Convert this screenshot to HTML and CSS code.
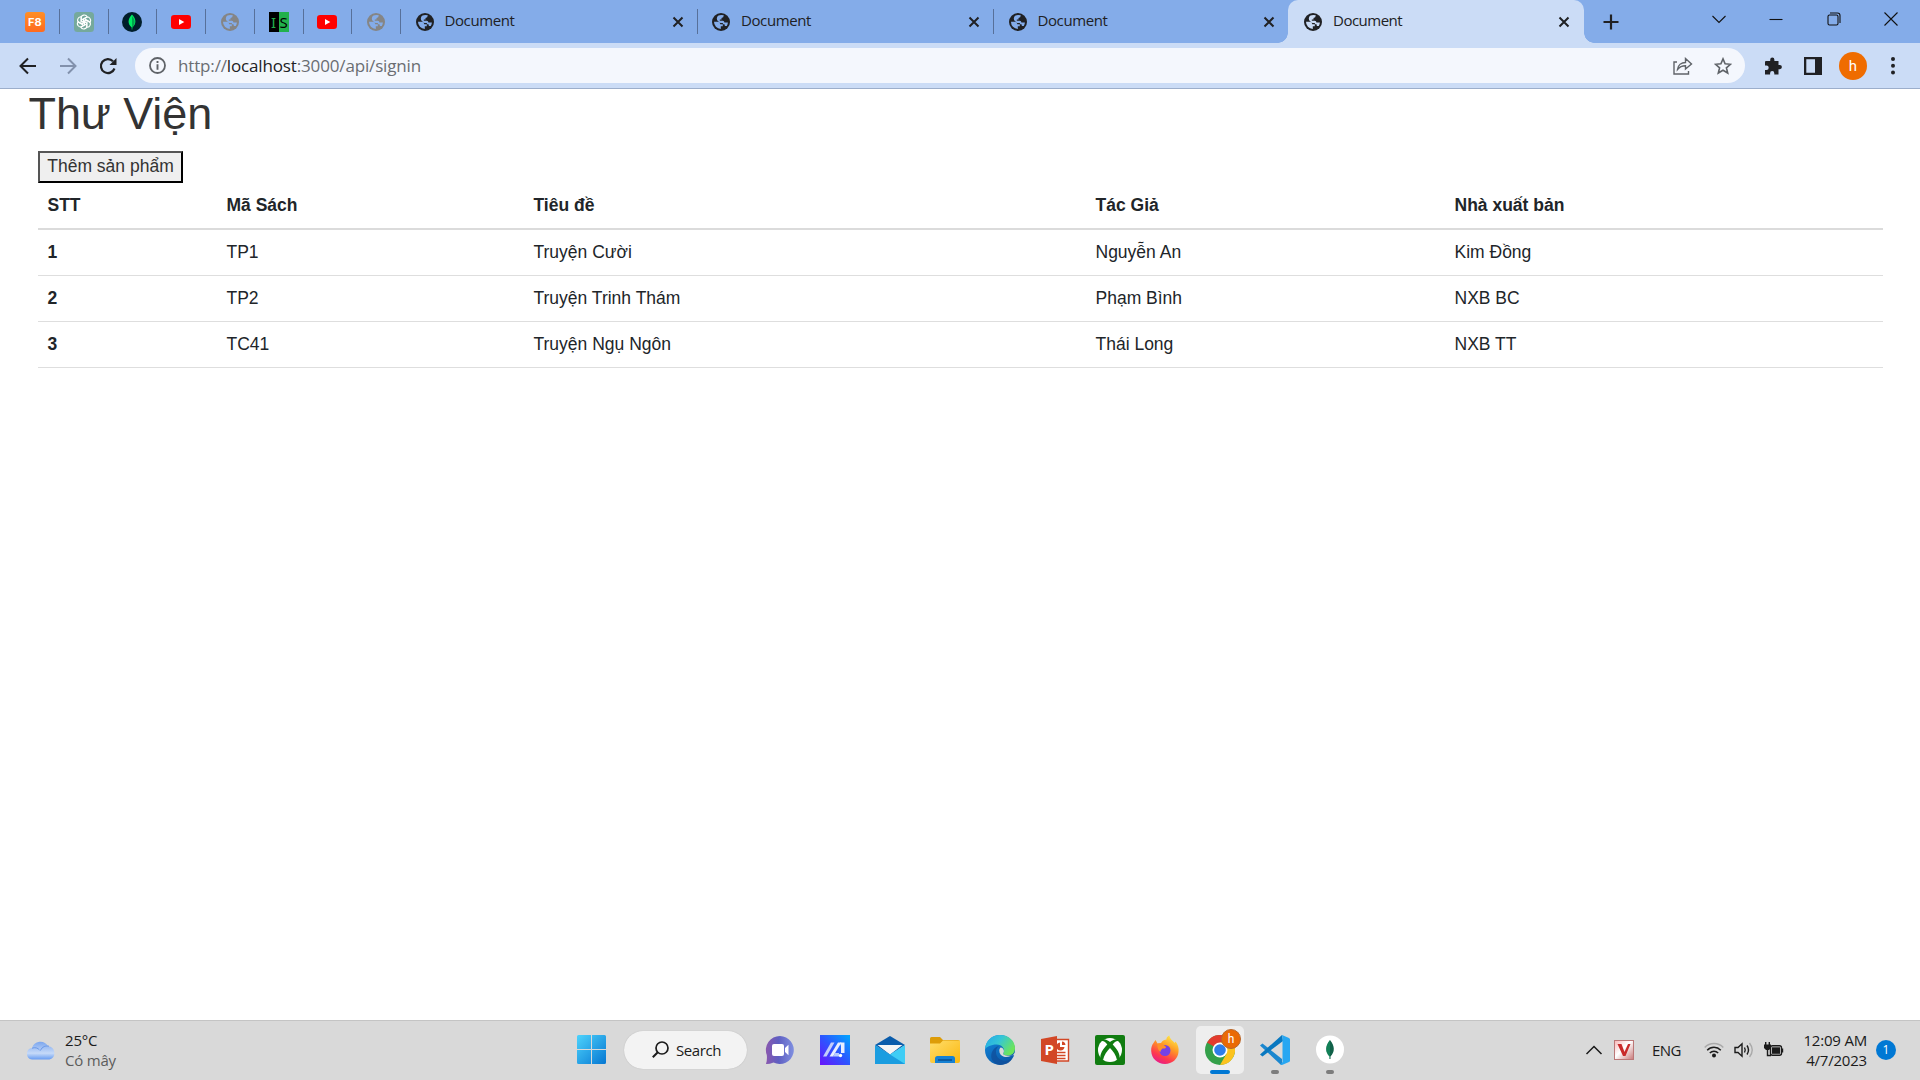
FILE: index.html
```html
<!DOCTYPE html>
<html lang="vi">
<head>
<meta charset="utf-8">
<title>Document</title>
<link rel="stylesheet" href="styles.css">
</head>
<body>
<svg width="0" height="0" class="defs">
  <defs>
    <symbol id="x" viewBox="0 0 12 12"><path d="M1.500 1.500L10.500 10.500M10.500 1.500L1.500 10.500" stroke="#202124" stroke-width="2"/></symbol>
    <symbol id="yt" viewBox="0 0 20 14"><rect width="20" height="14" rx="3.200" fill="#f00"/><path d="M8 4L13.300 7L8 10Z" fill="#fff"/></symbol>
    <symbol id="earth" viewBox="0 0 18 18"><circle cx="9" cy="9" r="9" fill="currentColor"/><path class="land" d="M2 8.800H5.500Q8 8.800 8.300 11.200H10.800V13.300H8.800V15.900A7 7 0 0 1 2 8.800ZM6.500 2.500Q9 1.500 11.800 2.300Q11.700 4.800 9.500 4.900V6.500H7.800V7.800H10.800Q12.400 8 12.400 9.600H15.900Q15.800 11.500 14.800 13H12.800V11.500Q10.800 11.500 10.700 9.900H8.500Q5 8.500 4.800 5.500Q4.800 3.500 6.500 2.500Z"/></symbol>
    <linearGradient id="gw" x1="0" y1="0" x2="1" y2="1"><stop stop-color="#4dd3fc"/><stop offset="1" stop-color="#0677d2"/></linearGradient>
    <linearGradient id="gt" x1="0" y1="0" x2="1" y2="0"><stop stop-color="#8a58ae"/><stop offset=".45" stop-color="#5f5fc2"/><stop offset="1" stop-color="#7f8fe0"/></linearGradient>
    <linearGradient id="gm" x1="0" y1="1" x2="1" y2="0"><stop stop-color="#6a12fb"/><stop offset=".5" stop-color="#2d55ff"/><stop offset="1" stop-color="#00a8ff"/></linearGradient>
    <linearGradient id="gf" x1="0" y1="0" x2="1" y2="1"><stop stop-color="#ffdd6b"/><stop offset="1" stop-color="#fbb80f"/></linearGradient>
    <linearGradient id="ge" x1="0" y1="0" x2="1" y2=".5"><stop stop-color="#22a6ea"/><stop offset=".5" stop-color="#35c6d6"/><stop offset="1" stop-color="#6be45c"/></linearGradient>
    <linearGradient id="gb" x1="0" y1="0" x2=".7" y2="1"><stop stop-color="#1389dd"/><stop offset="1" stop-color="#0a58a8"/></linearGradient>
    <linearGradient id="gx" x1=".8" y1="0" x2=".3" y2="1"><stop stop-color="#fff14c"/><stop offset=".4" stop-color="#ff9a24"/><stop offset=".75" stop-color="#ff3a4c"/><stop offset="1" stop-color="#e61b8c"/></linearGradient>
    <linearGradient id="gc" x1="0" y1="0" x2="0" y2="1"><stop stop-color="#7ba6ee"/><stop offset=".65" stop-color="#c6daf8"/><stop offset="1" stop-color="#679cf2"/></linearGradient>
    <linearGradient id="gv" x1="0" y1="0" x2="1" y2="1"><stop stop-color="#f8b5b5"/><stop offset=".45" stop-color="#fff"/><stop offset="1" stop-color="#c87777"/></linearGradient>
  </defs>
</svg>

<header class="tabs">
  <div class="pin"><span class="f8">F8</span></div>
  <div class="pin"><svg width="20" height="20" viewBox="0 0 20 20"><rect width="20" height="20" rx="3.500" fill="#75a99c"/><g fill="none" stroke="#fff" stroke-width="1.100"><path id="petal" d="M7 10.800V6.200C7 2.500 12 2 13.200 5L9.500 7.300V11.500"/><use href="#petal" transform="rotate(60 10 10)"/><use href="#petal" transform="rotate(120 10 10)"/><use href="#petal" transform="rotate(180 10 10)"/><use href="#petal" transform="rotate(240 10 10)"/><use href="#petal" transform="rotate(300 10 10)"/></g></svg></div>
  <div class="pin"><svg width="20" height="20" viewBox="0 0 20 20"><circle cx="10" cy="10" r="10" fill="#001e2b"/><path d="M10 2.500C14.500 7 14.500 12 10.300 15.500V17.500H9.700V15.500C5.500 12 5.500 7 10 2.500Z" fill="#00ed64"/><path d="M10 4V16C13.500 12 13.500 8 10 4Z" fill="#00a84c"/></svg></div>
  <div class="pin"><svg width="20" height="14"><use href="#yt"/></svg></div>
  <div class="pin grey"><svg width="18" height="18"><use href="#earth"/></svg></div>
  <div class="pin"><span class="is"><span class="i">I</span><span class="s">S</span></span></div>
  <div class="pin"><svg width="20" height="14"><use href="#yt"/></svg></div>
  <div class="pin grey"><svg width="18" height="18"><use href="#earth"/></svg></div>
  <div class="tab"><svg width="18" height="18"><use href="#earth"/></svg><span class="title">Document</span><svg width="12" height="12"><use href="#x"/></svg></div>
  <div class="tab"><svg width="18" height="18"><use href="#earth"/></svg><span class="title">Document</span><svg width="12" height="12"><use href="#x"/></svg></div>
  <div class="tab last"><svg width="18" height="18"><use href="#earth"/></svg><span class="title">Document</span><svg width="12" height="12"><use href="#x"/></svg></div>
  <div class="tab active"><svg width="18" height="18"><use href="#earth"/></svg><span class="title">Document</span><svg width="12" height="12"><use href="#x"/></svg></div>
  <svg class="plus" width="16" height="16" viewBox="0 0 16 16"><path d="M8 .5V15.500M.5 8H15.500" stroke="#202124" stroke-width="2.200"/></svg>
  <div class="win">
    <svg width="14" height="14" viewBox="0 0 14 14"><path d="M.5 4L7 10.500L13.500 4"/></svg>
    <svg width="14" height="14" viewBox="0 0 14 14"><path d="M.5 7.500H13.500"/></svg>
    <svg width="14" height="14" viewBox="0 0 14 14"><rect x="1" y="3" width="10" height="10" rx="1.500"/><path d="M3 1H10.500Q13 1 13 3.500V11"/></svg>
    <svg width="14" height="14" viewBox="0 0 14 14"><path d="M.5 .5L13.500 13.500M13.500 .5L.5 13.500"/></svg>
  </div>
</header>

<div class="toolbar">
  <nav class="nav">
    <svg width="18" height="18" viewBox="0 0 18 18"><path d="M17 9H2M9 1.500L1.500 9L9 16.500" fill="none" stroke="#202124" stroke-width="2"/></svg>
    <svg width="18" height="18" viewBox="0 0 18 18"><path d="M1 9H16M9 1.500L16.500 9L9 16.500" fill="none" stroke="#8291ac" stroke-width="2"/></svg>
    <svg width="18" height="18" viewBox="0 0 18 18"><path d="M15.500 11.500A7 7 0 1 1 14 4.200" fill="none" stroke="#202124" stroke-width="2.200"/><path d="M17.500 1V8H10.500Z" fill="#202124"/></svg>
  </nav>
  <div class="omnibox">
    <svg width="17" height="17" viewBox="0 0 17 17"><circle cx="8.500" cy="8.500" r="7.500" fill="none" stroke="#5f6368" stroke-width="1.800"/><path d="M8.500 7.300V12.700M8.500 4V5.900" stroke="#5f6368" stroke-width="1.900"/></svg>
    <span class="url">http://<b>localhost</b>:3000/api/signin</span>
    <svg width="20" height="18" viewBox="0 0 20 18"><path d="M4 5H1V17H15.500V14M4.500 12.500C5 8 8.500 5.500 12.500 5.500V1.500L18.500 7L12.500 12V8.800C9 8.800 6.500 10 4.500 12.500Z" fill="none" stroke="#5f6368" stroke-width="1.400"/></svg>
    <svg class="star" width="18" height="18" viewBox="0 0 18 18"><path d="M9 1.900L11.100 6.800L16.500 7.300L12.400 10.800L13.700 16L9 13.200L4.300 16L5.600 10.800L1.500 7.300L6.900 6.800Z" fill="none" stroke="#5f6368" stroke-width="1.600"/></svg>
  </div>
  <div class="tools">
    <svg width="18" height="18" viewBox="0 0 18 18"><path d="M2 4H6.200V2.700A2.100 2.100 0 0 1 10.400 2.700V4H14.500V8H15.800A2.100 2.100 0 0 1 15.800 12.200H14.500V17.500H10.300V16.200A2.100 2.100 0 0 0 6.100 16.200V17.500H1V13H2.500A2.200 2.200 0 0 0 2.500 8.600H1V5Q1 4 2 4Z" fill="#202124"/></svg>
    <svg class="panel" width="18" height="18" viewBox="0 0 18 18"><path fill="#202124" fill-rule="evenodd" d="M0 0H18V18H0ZM2.300 2.300V15.700H11V2.300Z"/></svg>
    <span class="avatar">h</span>
    <svg width="4" height="18" viewBox="0 0 4 18"><g fill="#202124"><circle cx="2" cy="2" r="2"/><circle cx="2" cy="8.700" r="2"/><circle cx="2" cy="15.500" r="2"/></g></svg>
  </div>
</div>

<main class="page">
  <h1>Thư Viện</h1>
  <button class="add">Thêm sản phẩm</button>
  <table class="books">
    <thead><tr><th class="c1">STT</th><th class="c2">Mã Sách</th><th class="c3">Tiêu đề</th><th class="c4">Tác Giả</th><th>Nhà xuất bản</th></tr></thead>
    <tbody>
      <tr><th>1</th><td>TP1</td><td>Truyện Cười</td><td>Nguyễn An</td><td>Kim Đồng</td></tr>
      <tr><th>2</th><td>TP2</td><td>Truyện Trinh Thám</td><td>Phạm Bình</td><td>NXB BC</td></tr>
      <tr><th>3</th><td>TC41</td><td>Truyện Ngụ Ngôn</td><td>Thái Long</td><td>NXB TT</td></tr>
    </tbody>
  </table>
</main>

<footer class="taskbar">
  <div class="weather">
    <svg width="30" height="20" viewBox="0 0 30 20"><path d="M6 19.500A5.800 5.800 0 0 1 6 8A8.700 8.700 0 0 1 22 6.200A6.800 6.800 0 0 1 23.500 19.500Z" fill="url(#gc)"/><path d="M6 8.200C9 7 12 8 13.500 10M14.500 10.500C16 6.500 20 5.500 23 6.200" fill="none" stroke="#6b98e8" stroke-width="1"/></svg>
    <div class="wtext"><span>25°C</span><span class="dim">Có mây</span></div>
  </div>
  <div class="apps">
    <svg class="start" width="29" height="29" viewBox="0 0 29 29"><path d="M1.500 0H14V14H0V1.500Q0 0 1.500 0ZM15 0H27.500Q29 0 29 1.500V14H15ZM0 15H14V29H1.500Q0 29 0 27.500ZM15 15H29V27.500Q29 29 27.500 29H15Z" fill="url(#gw)"/></svg>
    <div class="search"><svg width="17" height="17" viewBox="0 0 17 17"><circle cx="10" cy="7" r="6" fill="none" stroke="#1b1b1b" stroke-width="1.700"/><path d="M5.800 11.200L.8 16.200" stroke="#1b1b1b" stroke-width="2"/></svg><span>Search</span></div>
    <div class="app"><svg width="30" height="30" viewBox="0 0 30 30"><path d="M15 1A14 14 0 1 1 8.500 27.500Q4 29.300 1 29Q2.300 25 1.800 20A14 14 0 0 1 15 1Z" fill="url(#gt)"/><rect x="7" y="9" width="12" height="12" rx="2" fill="#fff"/><path d="M20 13L23.500 9.800V20.200L20 17Z" fill="#fff"/></svg></div>
    <div class="app"><svg width="30" height="30" viewBox="0 0 30 30"><path fill="url(#gm)" d="M0 0H30V30H0Z"/><path d="M3 21.500L11 7.500H14.500L6.500 21.500Z" fill="#c3cdfb"/><path d="M9.500 21.500L18 7.500H21.500L13 21.500Z" fill="#e8eeff"/><path d="M20 7.500H24.500V18H21V11Z" fill="#e8eeff"/><path d="M15 18H19V21.500H13Z" fill="#b5caff"/><circle cx="20.500" cy="20.500" r="1.700" fill="#fff"/></svg></div>
    <div class="app"><svg width="30" height="30" viewBox="0 0 30 30"><path d="M0 10L15 1L30 10L15 20Z" fill="#0a5cab"/><path d="M2.500 10H27.500L15 19.500Z" fill="#f5f5f5"/><path d="M30 10V29H0Z" fill="#3fcdf5"/><path d="M0 10L30 29H0Z" fill="#1b9de0"/></svg></div>
    <div class="app"><svg width="30" height="30" viewBox="0 0 30 30"><path d="M0 3.500Q0 2 1.500 2H10L13 5H28Q30 5 30 7V10H0Z" fill="#dd9c08"/><path d="M0 8.500H10L13 5.500H30V26Q30 28 28 28H2Q0 28 0 26Z" fill="url(#gf)"/><path d="M5 28V23.500Q5 21 7.500 21H22.500Q25 21 25 23.500V28Z" fill="#1681d3"/><path d="M8 25H22" stroke="#0a4f91" stroke-width="1.500"/></svg></div>
    <div class="app"><svg width="30" height="30" viewBox="0 0 30 30"><circle cx="15" cy="15" r="15" fill="url(#gb)"/><path d="M0 14C1 5 7 0 15 0C24 0 30 6 30 13C30 18 27 20.500 22.500 20.500C19 20.500 17.500 19 18.500 17.500C20.500 14 17 9.500 11.500 9.500C6 9.500 1.500 12 0 14Z" fill="url(#ge)"/><path d="M14 11C9 14 10 24 18 25.500C22 26.500 26 24.500 27.500 23C25 28 20 30 15 30C8 29 4.500 23 7 17C8.500 13.500 11 11.500 14 11Z" fill="#104e9a" opacity=".75"/><path d="M15.500 12.500C13 15 14.500 20.500 19 21.700C22.500 22.600 26 21 28 20L30.500 17V20L27 20.500C24 21.300 20 20.500 18.300 19.200C17.800 18.500 18.700 17.500 18.900 16.500C19.200 14.500 17.500 12.500 15.500 12.500Z" fill="#d9d9d9"/></svg></div>
    <div class="app"><svg width="30" height="30" viewBox="0 0 30 30"><path d="M14 4.500H28.500V26H14Z" fill="#fff" stroke="#d24726" stroke-width="1.400"/><path d="M17 17.500H25.500M17 20.500H25.500M17 23.500H25.500" stroke="#d24726" stroke-width="1.500"/><path d="M20 7.500A4 4 0 1 0 24.500 12H20Z" fill="#d24726"/><path d="M22 6.500A4 4 0 0 1 25.500 10H22Z" fill="#d24726"/><path d="M1 4L17 1V29L1 26Z" fill="#d24726"/><text x="4.500" y="20" class="ppt">P</text></svg></div>
    <div class="app"><svg width="30" height="30" viewBox="0 0 30 30"><rect width="30" height="30" rx="2" fill="#107c10"/><circle cx="15" cy="15" r="12" fill="#fff"/><path d="M7 4.500C10 3.500 13 5.500 15 7C17 5.500 20 3.500 23 4.500L23.500 6C21.500 5.500 19 7.500 17.700 9.500C22 14 25.500 19 24.500 24L22 25C21 20 18 16 15 13C12 16 9 20 8 25L5.500 24C4.500 19 8 14 12.300 9.500C11 7.500 8.500 5.500 6.500 6Z" fill="#107c10"/></svg></div>
    <div class="app"><svg width="30" height="30" viewBox="0 0 30 30"><path d="M3.500 8L5.500 5L7.500 8.500L11 8C12.500 5 15 4.500 16.500 4.500C16 2.500 18 1 19.500 .5C19.500 4 23 5.500 24.500 8L25.500 6.500C28 9.500 29 13 28.500 17C28 24 22 29 15 29C7.500 29 1.500 23.500 1.200 16C1 12.500 2 10 3.500 8Z" fill="url(#gx)"/><circle cx="15" cy="15.500" r="5.500" fill="#7542e5"/><path d="M7.500 9C10 8 13 9 15.500 11.500C17 12.500 15 14 12.500 13.500C11.500 14.500 10.500 15 10.500 17C9 16 7 13 7.500 9Z" fill="#ff9129"/></svg></div>
    <div class="app current"><svg width="30" height="30" viewBox="0 0 30 30"><circle cx="15" cy="15" r="15" fill="#34a04a"/><path d="M15 15L2 7.500A15 15 0 0 1 28 7.500H15Z" fill="#e33b2e"/><path d="M15 7.500H28A15 15 0 0 1 15 30L21.500 18.750Z" fill="#fcc31e"/><circle cx="15" cy="15" r="7.500" fill="#fff"/><circle cx="15" cy="15" r="5.800" fill="#2f7de9"/></svg><span class="badge">h</span><i class="bar"></i></div>
    <div class="app"><svg width="30" height="30" viewBox="0 0 30 30"><path d="M0 10.500L2.500 8.500L22 24V30L20.500 29.500Z" fill="#1b87cf"/><path d="M22 0L0 19.500L2.500 21.500L23 6Z" fill="#0878c0"/><path d="M22 0L29 3Q30 3.500 30 4.500V25.500Q30 26.500 29 27L22 30L20.500 29.500L22.500 27V3Z" fill="#27a7f2"/></svg><i class="bar"></i></div>
    <div class="app"><svg width="30" height="30" viewBox="0 0 30 30"><circle cx="15" cy="14.500" r="14" fill="#fff"/><path d="M15 5C20 11 20 17 15.500 21.500V24H14.500V21.500C10 17 10 11 15 5Z" fill="#116149"/><path d="M15 5V24H14.500V21.500C10 17 10 11 15 5Z" fill="#13a065" opacity=".5"/></svg><i class="bar"></i></div>
  </div>
  <div class="tray">
    <svg width="18" height="10" viewBox="0 0 18 10"><path d="M1.500 9L9 1.500L16.500 9" fill="none" stroke="#1b1b1b" stroke-width="1.500"/></svg>
    <svg class="vn" width="20" height="20" viewBox="0 0 20 20"><rect x=".5" y=".5" width="19" height="19" fill="url(#gv)" stroke="#b77"/><path d="M3.500 4H7.500L10.500 12L14 4H16.500L11.500 16H9Z" fill="#c92a2a"/></svg>
    <span class="lang">ENG</span>
    <svg class="wifi" width="20" height="16" viewBox="0 0 20 16"><g fill="none" stroke="#1b1b1b" stroke-width="1.500"><path d="M.7 5.500A13 13 0 0 1 19.300 5.500" stroke="#aaa"/><path d="M3.200 8.200A9.500 9.500 0 0 1 16.800 8.200M5.800 11A6 6 0 0 1 14.200 11"/></g><circle cx="10" cy="13.500" r="2" fill="#1b1b1b"/></svg>
    <svg class="vol" width="20" height="16" viewBox="0 0 20 16"><g fill="none" stroke="#1b1b1b" stroke-width="1.400"><path d="M1 5.500H4L8 1.800V14.200L4 10.500H1Z"/><path d="M10.500 5.500Q12 8 10.500 10.500M13 3.500Q16 8 13 12.500"/><path d="M15.500 1Q21 8 15.500 15" stroke="#aaa"/></g></svg>
    <svg class="bat" width="20" height="16" viewBox="0 0 20 16"><rect x="6.500" y="3.700" width="11" height="9.600" rx="2" fill="none" stroke="#1b1b1b" stroke-width="1.400"/><rect x="8" y="5.300" width="8" height="6.500" fill="#1b1b1b"/><path d="M18 6.500H19.200V10.500H18Z" fill="#1b1b1b"/><path d="M1.700 0V3M5.300 0V3M3.500 7V13.500H7" fill="none" stroke="#1b1b1b" stroke-width="1.400"/><path d="M0 2.500H7V6L5 8H2L0 6Z" fill="#1b1b1b"/></svg>
    <div class="clock"><span>12:09 AM</span><span>4/7/2023</span></div>
    <span class="count">1</span>
  </div>
</footer>
</body>
</html>
```
FILE: styles.css
```css
* { box-sizing: border-box; }
body {
  margin: 0;
  height: 1080px;
  display: flex;
  flex-direction: column;
  overflow: hidden;
  background: #fff;
  font-family: "Open Sans", "Noto Sans", sans-serif;
}
svg { display: block; flex: none; }
.defs { height: 0; }

/* tab strip */
.tabs {
  height: 43px;
  flex: none;
  display: flex;
  align-items: center;
  padding-left: 11px;
  background: #84ace9;
  color: #202124;
  --land: #84ace9;
}
.pin {
  width: 48.75px;
  height: 25px;
  flex: none;
  display: flex;
  align-items: center;
  justify-content: center;
  border-right: 1px solid #57709a;
}
.grey { color: #858585; }
.land { fill: var(--land); }
.f8 {
  width: 20px;
  height: 20px;
  border-radius: 3px;
  background: linear-gradient(#ff8f26, #ff6a1f);
  color: #fff;
  font: bold 11px/20px "Inter", sans-serif;
  text-align: center;
}
.is { display: flex; width: 20px; height: 20px; font: 15px/20px "Noto Sans", sans-serif; }
.is span { width: 10px; text-align: center; overflow: hidden; }
.is .i { background: #000; color: #22b14c; }
.is .s { background: #22b14c; color: #000; }
.tab {
  width: 296.5px;
  height: 25px;
  flex: none;
  display: flex;
  align-items: center;
  padding: 0 13px 0 14.500px;
  border-right: 1px solid #57709a;
}
.tab.last { width: 294px; border-right: 0; }
.title { flex: 1; margin-left: 11px; padding-bottom: 2px; font-size: 15px; letter-spacing: -.4px; line-height: 23px; }
.tab.active {
  --land: #cbdcf6;
  position: relative;
  width: 296px;
  height: 43px;
  padding: 0 14px 0 16px;
  border: 0;
  border-radius: 10px 10px 0 0;
  background: #cbdcf6;
}
.active .title { letter-spacing: -.5px; }
.tab.active::before, .tab.active::after {
  content: "";
  position: absolute;
  bottom: 0;
  left: -10px;
  width: 10px;
  height: 10px;
  background: radial-gradient(circle at 0 0, #84ace9 9.500px, #cbdcf6 10px);
}
.tab.active::after {
  left: 100%;
  background: radial-gradient(circle at 100% 0, #84ace9 9.500px, #cbdcf6 10px);
}
.plus { margin-left: 19px; }
.win { display: flex; gap: 43.400px; margin: 0 22px 6px auto; }
.win svg { fill: none; stroke: #111; stroke-width: 1.100; }

/* address row */
.toolbar {
  height: 46px;
  flex: none;
  display: flex;
  align-items: center;
  border-bottom: 1px solid #9caecb;
  background: #cbdcf6;
}
.nav { display: flex; gap: 22px; width: 135px; padding-left: 19px; }
.omnibox {
  width: 1610px;
  height: 35px;
  display: flex;
  align-items: center;
  padding: 0 13px 0 14px;
  border-radius: 18px;
  background: #f4f7fd;
}
.url { flex: 1; margin-left: 12px; font-size: 17px; letter-spacing: -.15px; color: #6a6d72; }
.url b { font-weight: 400; color: #202124; }
.star { margin-left: 21px; }
.tools { display: flex; align-items: center; margin-left: 18.500px; }
.panel { margin-left: 22px; }
.avatar {
  width: 28px;
  height: 28px;
  margin: 0 23.500px 0 17.500px;
  border-radius: 50%;
  background: #ef6c00;
  color: #fff;
  font: 15px/28px "Roboto", sans-serif;
  text-align: center;
}

/* document */
.page {
  flex: 1;
  padding: 0 37px 0 38px;
  font: 17.500px/25px "Liberation Sans", Arial, sans-serif;
  color: #212529;
}
h1 { margin: 0 0 12px -9.500px; font-size: 45px; font-weight: 400; line-height: 50px; letter-spacing: -.1px; color: #333; }
.add {
  display: block;
  width: 145px;
  height: 32px;
  padding: 0 0 2px;
  border: 2px solid;
  border-color: #555 #000 #000 #555;
  background: #efefef;
  color: #333;
  font: inherit;
  white-space: nowrap;
}
.books { width: 1845px; border-collapse: collapse; table-layout: fixed; }
.books th, .books td { height: 46px; padding: 0 9.500px; text-align: left; border-bottom: 1px solid #dedede; }
.books thead th { border-bottom: 2px solid #dbdbdb; }
.c1 { width: 179px; }
.c2 { width: 307px; }
.c3 { width: 562px; }
.c4 { width: 359px; }

/* taskbar */
.taskbar {
  height: 60px;
  flex: none;
  display: flex;
  align-items: center;
  padding-bottom: 2px;
  border-top: 1px solid #c4c4c4;
  background: #d9d9d9;
  color: #1b1b1b;
  font-size: 15px;
}
.weather { width: 577px; display: flex; align-items: center; padding-left: 26px; gap: 9px; }
.wtext, .clock { display: flex; flex-direction: column; line-height: 20px; letter-spacing: -.2px; }
.dim { color: #5c5c5c; }
.apps { display: flex; align-items: center; }
.search {
  width: 123px;
  height: 38px;
  margin: 0 8px 0 18px;
  display: flex;
  align-items: center;
  gap: 7px;
  padding-left: 28px;
  border-radius: 19px;
  background: #f3f3f3;
  box-shadow: 0 0 1px #aaa;
  letter-spacing: -.4px;
}
.app {
  position: relative;
  left: 1px;
  width: 48px;
  height: 48px;
  margin-right: 7px;
  display: flex;
  align-items: center;
  justify-content: center;
}
.ppt { font: bold 15px "Open Sans", sans-serif; fill: #fff; }
.current { border-radius: 5px; background: #eee; }
.badge {
  position: absolute;
  top: 3px;
  left: 25px;
  width: 20px;
  height: 20px;
  border: 1px solid #b9672a;
  border-radius: 50%;
  background: #ea6a05;
  color: #fff;
  font: 12px/18px "Roboto", sans-serif;
  text-align: center;
}
.bar {
  position: absolute;
  bottom: 0;
  left: 20px;
  width: 8px;
  height: 4px;
  border-radius: 2px;
  background: #7d7d7d;
}
.current .bar { left: 14px; width: 20px; background: #0078d4; }
.tray { flex: 1; display: flex; align-items: center; justify-content: flex-end; padding-right: 24px; }
.vn { margin-left: 11px; }
.lang { width: 29px; margin-left: 18px; letter-spacing: -.6px; }
.wifi { margin-left: 23px; }
.vol, .bat { margin-left: 10px; }
.clock { width: 72px; margin-left: 11px; margin-right: -1px; text-align: right; white-space: nowrap; }
.count {
  width: 20px;
  height: 20px;
  margin-left: 10px;
  border-radius: 50%;
  background: #0078d4;
  color: #fff;
  font-size: 12px;
  line-height: 20px;
  text-align: center;
}
```
